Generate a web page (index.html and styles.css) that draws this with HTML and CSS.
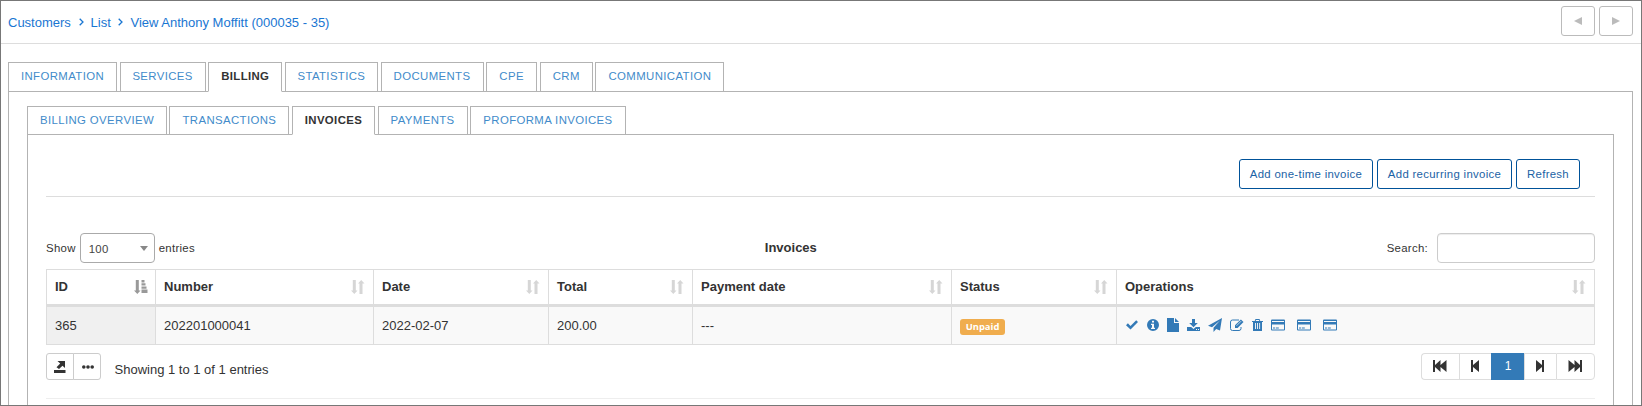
FILE: index.html
```html
<!DOCTYPE html>
<html lang="en">
<head>
<meta charset="utf-8">
<title>Customer invoices</title>
<link rel="stylesheet" href="styles.css">
</head>
<body>
<svg class="defs" aria-hidden="true">
  <symbol id="sort" viewBox="0 0 14 14"><path d="M1.800 0h3v10.500h1.700L3.300 14 0 10.500h1.800zM8.500 14h3V3.500h2L10.200 0 7 3.500h1.500z"/></symbol>
  <symbol id="sort-asc" viewBox="0 0 14 14"><path d="M1.800 0h3v10.500h1.700L3.300 14 0 10.500h1.800zM7.500 0h3v2.400h-3zM7.500 3.200h4v2.400h-4zM7.500 6.400h5v2.400h-5zM7.500 9.600h6v3.400h-6z"/></symbol>
  <symbol id="card" viewBox="0 0 14 12"><path fill-rule="evenodd" d="M1 .5h12a1 1 0 0 1 1 1v9a1 1 0 0 1-1 1H1a1 1 0 0 1-1-1v-9a1 1 0 0 1 1-1zM1 2v1h12V2zM1 5.500v5h12v-5zM2 8.500h2v1H2zM4.800 8.500h3v1h-3z"/></symbol>
</svg>
<div class="page">
  <header class="topbar">
    <nav class="crumbs">
      <a>Customers</a><svg class="chev" viewBox="0 0 5 8"><path d="M.7.7 4 4 .7 7.300"/></svg><a>List</a><svg class="chev" viewBox="0 0 5 8"><path d="M.7.7 4 4 .7 7.300"/></svg><a>View Anthony Moffitt (000035 - 35)</a>
    </nav>
    <div class="pager">
      <button class="arrow"><svg viewBox="0 0 8 8"><path d="M8 0v8L0 4z"/></svg></button>
      <button class="arrow"><svg viewBox="0 0 8 8"><path d="M0 0v8l8-4z"/></svg></button>
    </div>
  </header>
  <main class="main">
    <div class="tabs">
      <a class="tab w109">INFORMATION</a><a class="tab w86">SERVICES</a><a class="tab w74 active">BILLING</a><a class="tab w93">STATISTICS</a><a class="tab w103">DOCUMENTS</a><a class="tab w51">CPE</a><a class="tab w53">CRM</a><a class="tab w129">COMMUNICATION</a>
    </div>
    <div class="panel outer">
      <div class="tabs sub">
        <a class="tab w140">BILLING OVERVIEW</a><a class="tab w120">TRANSACTIONS</a><a class="tab w83 active">INVOICES</a><a class="tab w90">PAYMENTS</a><a class="tab w156">PROFORMA INVOICES</a>
      </div>
      <div class="panel inner">
        <div class="actions">
          <button class="btn b1">Add one-time invoice</button><button class="btn b2">Add recurring invoice</button><button class="btn b3">Refresh</button>
        </div>
        <div class="tools">
          <div class="length">Show <span class="select">100<svg class="caret" viewBox="0 0 8 5"><path d="M0 0h8L4 5z"/></svg></span> entries</div>
          <div class="title">Invoices</div>
          <label class="search">Search: <input type="text" class="field"></label>
        </div>
        <table class="grid">
          <colgroup><col class="c1"><col class="c2"><col class="c3"><col class="c4"><col class="c5"><col class="c6"><col class="c7"></colgroup>
          <thead><tr>
            <th><div class="head">ID<svg class="sort on"><use href="#sort-asc"/></svg></div></th>
            <th><div class="head">Number<svg class="sort"><use href="#sort"/></svg></div></th>
            <th><div class="head">Date<svg class="sort"><use href="#sort"/></svg></div></th>
            <th><div class="head">Total<svg class="sort"><use href="#sort"/></svg></div></th>
            <th><div class="head">Payment date<svg class="sort"><use href="#sort"/></svg></div></th>
            <th><div class="head">Status<svg class="sort"><use href="#sort"/></svg></div></th>
            <th><div class="head">Operations<svg class="sort"><use href="#sort"/></svg></div></th>
          </tr></thead>
          <tbody><tr>
            <td class="sorted">365</td><td>202201000041</td><td>2022-02-07</td><td>200.00</td><td>---</td>
            <td><span class="badge">Unpaid</span></td>
            <td><div class="ops">
              <svg class="i-check" viewBox="0 0 12 10"><path d="M0 5.200 1.900 3.300 4.500 5.900 10.200.2 12 2 4.500 9.500z"/></svg>
              <svg class="i-info" viewBox="0 0 12 12"><path fill-rule="evenodd" d="M6 0a6 6 0 1 1 0 12A6 6 0 0 1 6 0zM5 1.700v1.800h2V1.700zM4 4.700v1.200h1v2.800H4V10h4V8.700H7v-4z"/></svg>
              <svg class="i-file" viewBox="0 0 12 14"><path d="M0 0h7v5h5v9H0zM8 0l4 4H8z"/></svg>
              <svg class="i-down" viewBox="0 0 13 12"><path fill-rule="evenodd" d="M5 0h3v4h2.800L6.500 8.200 2.200 4H5zM0 8h4.200l2.300 2 2.300-2H13v4H0zM9 10v1h1v-1zM11 10v1h1v-1z"/></svg>
              <svg class="i-send" viewBox="0 0 14 14"><path d="M14 0 12 12.500 8.200 10.900 5.500 14V9.800L12 2.500 4 9.200 0 7.700z"/></svg>
              <svg class="i-edit" viewBox="0 0 14 12"><path class="line" d="M9 1H2.500A2 2 0 0 0 .5 3v6.500a2 2 0 0 0 2 2H9a2 2 0 0 0 2-2V8"/><path d="M5 6.300 10.900.4l2.600 2.600-5.900 5.900H5z"/><path class="cut" d="m6.500 6.800 4.700-4.700"/></svg>
              <svg class="i-trash" viewBox="0 0 11 12"><path fill-rule="evenodd" d="M3.500 0h4l.8 2H11v1h-1v9H1V3H0V2h2.700zM4 1l-.3 1h3.600L7 1zM3 4v6h.9V4zM5.100 4v6H6V4zM7.200 4v6h.9V4z"/></svg>
              <svg class="i-card"><use href="#card"/></svg>
              <svg class="i-card"><use href="#card"/></svg>
              <svg class="i-card"><use href="#card"/></svg>
            </div></td>
          </tr></tbody>
        </table>
        <div class="foot">
          <div class="group">
            <button class="small"><svg class="i-export" viewBox="0 0 12 12"><path d="M3.500 0H11v7L8.500 4.800 5 8 2.500 6.200 6.200 2.600zM0 9h11.500v3H0z"/></svg></button>
            <button class="small"><svg class="i-dots" viewBox="0 0 12 4"><circle cx="1.800" cy="2" r="1.800"/><circle cx="6" cy="2" r="1.800"/><circle cx="10.200" cy="2" r="1.800"/></svg></button>
          </div>
          <span class="info">Showing 1 to 1 of 1 entries</span>
          <div class="pages">
            <a class="pg p38"><svg class="i-ff" viewBox="0 0 14 12"><path d="M0 0h2v5l5.500-5v5L13.500 0v12L7.500 7v5L2 7v5H0z"/></svg></a>
            <a class="pg p32"><svg class="i-f" viewBox="0 0 8 12"><path d="M0 0h2v5l6-5v12L2 7v5H0z"/></svg></a>
            <a class="pg cur">1</a>
            <a class="pg p32"><svg class="i-f flip" viewBox="0 0 8 12"><path d="M0 0h2v5l6-5v12L2 7v5H0z"/></svg></a>
            <a class="pg p39"><svg class="i-ff flip" viewBox="0 0 14 12"><path d="M0 0h2v5l5.500-5v5L13.500 0v12L7.500 7v5L2 7v5H0z"/></svg></a>
          </div>
        </div>
      </div>
    </div>
  </main>
</div>
</body>
</html>
```

FILE: styles.css
```css
* { box-sizing: border-box; }
body { margin: 0; background: #fff; color: #333; font: 12px/18px "Liberation Sans", Arial, sans-serif; }
button { font: inherit; background: #fff; padding: 0; margin: 0; }
svg { display: block; fill: currentColor; flex: none; }
.defs { width: 0; height: 0; float: left; }
.page { height: 406px; border: 1px solid #777; overflow: hidden; }
.topbar { height: 43px; border-bottom: 1px solid #ddd; display: flex; justify-content: space-between; padding: 5px 8px 0 7px; }
.crumbs { display: flex; align-items: center; height: 34px; font-size: 13px; color: #1976d2; }
.chev { width: 5px; height: 8px; margin: 0 7px 2px 7.700px; fill: none; stroke: currentColor; stroke-width: 1.300; }
.pager { display: flex; gap: 4px; }
.arrow { width: 34px; height: 30px; border: 1px solid #bbb; border-radius: 3px; color: #bbb; display: flex; align-items: center; justify-content: center; }
.arrow svg { width: 8px; height: 8px; }
.main { padding: 18px 8px 0 7px; }
.tabs { display: flex; justify-content: flex-start; gap: 2.630px; height: 30px; position: relative; z-index: 1; margin-bottom: -1px; }
.sub { height: 29px; gap: 2.400px; }
.tab { border: 1px solid #b3b3b3; height: 100%; text-align: center; line-height: 27px; color: #428bca; white-space: nowrap; background: #fff; }
.tab, .btn, .length, .search { font-size: 11.400px; letter-spacing: .3px; }
.tab { letter-spacing: .38px; }
.tab.active { color: #333; font-weight: bold; border-bottom-color: #fff; }
.w109 { width: 109px; } .w86 { width: 86px; } .w74 { width: 74px; } .w93 { width: 93px; }
.w103 { width: 103px; } .w51 { width: 51px; } .w53 { width: 53px; } .w129 { width: 129px; }
.w140 { width: 140px; } .w120 { width: 120px; } .w83 { width: 83.400px; } .w90 { width: 90px; } .w156 { width: 156px; }
.panel { border: 1px solid #b3b3b3; border-bottom: 0; }
.outer { padding: 14px 18px 0; height: 330px; }
.inner { padding: 24px 18px 0; height: 290px; }
.actions { display: flex; justify-content: flex-end; gap: 4px; height: 38px; padding-right: 15px; border-bottom: 1px solid #ddd; }
.btn { height: 30px; border: 1px solid #005299; border-radius: 3px; color: #1b62a5; }
.b1 { width: 134px; } .b2 { width: 135px; } .b3 { width: 64px; }
.tools { display: flex; justify-content: space-between; align-items: center; height: 30px; margin: 36px 0 6px; }
.length { display: flex; align-items: center; gap: 4px; }
.length, .search { line-height: 28px; }
.select { display: flex; align-items: center; justify-content: space-between; width: 75px; height: 30px; padding: 2px 6px 0 8px; border: 1px solid #aaa; border-radius: 4px; color: #444; }
.caret { width: 8px; height: 5px; margin-bottom: 2px; color: #888; }
.title { font-size: 13px; font-weight: bold; }
.search { display: flex; justify-content: flex-end; align-items: center; gap: 9px; }
.field { width: 158px; height: 30px; border: 1px solid #ccc; border-radius: 4px; box-shadow: inset 0 1px 1px rgba(0,0,0,.075); }
.grid { width: 1549px; border-collapse: separate; border-spacing: 0; table-layout: fixed; border-left: 1px solid #ddd; border-top: 1px solid #ddd; font-size: 13px; }
.c1 { width: 109px; } .c2 { width: 218px; } .c3 { width: 175px; } .c4 { width: 144px; } .c5 { width: 259px; } .c6 { width: 165px; }
th { height: 37px; padding: 0 8px; border-right: 1px solid #ddd; border-bottom: 3px solid #ddd; text-align: left; }
.head { display: flex; justify-content: space-between; align-items: center; height: 34px; }
.sort { width: 14px; height: 14px; color: #d6d6d6; }
.sort.on { color: #999; margin-right: -1px; }
td { height: 38px; padding: 0 8px; border-right: 1px solid #ddd; border-bottom: 1px solid #ddd; background: #f9f9f9; }
td.sorted { background: #f0f0f0; }
.badge { display: block; width: 45px; height: 16px; margin-top: 3px; border-radius: 3px; background: #f0ad4e; color: #fff; font: bold 9.400px/16px "Open Sans", sans-serif; text-align: center; }
.ops { display: flex; align-items: center; color: #337ab7; margin-bottom: 2px; }
.i-check { width: 12px; height: 10px; margin: 0 9px 0 1px; }
.i-info { width: 12px; height: 12px; margin-right: 8px; }
.i-file { width: 12px; height: 14px; margin-right: 8px; }
.i-down { width: 13px; height: 12px; margin-right: 8px; }
.i-send { width: 14px; height: 14px; margin-right: 8px; }
.i-edit { width: 14px; height: 12px; margin-right: 8px; }
.i-trash { width: 11px; height: 12px; margin-right: 8px; }
.i-card { width: 14px; height: 12px; margin-right: 12px; }
.line { fill: none; stroke: currentColor; }
.cut { stroke: #f9f9f9; stroke-width: .7; }
.foot { display: flex; align-items: flex-start; height: 54px; padding-top: 8px; border-bottom: 1px solid #eee; }
.group { display: flex; }
.small { width: 28px; height: 27px; border: 1px solid #ccc; border-radius: 3px 0 0 3px; display: flex; align-items: center; justify-content: center; color: #333; }
.small + .small { margin-left: -1px; border-radius: 0 3px 3px 0; }
.i-export { width: 12px; height: 12px; }
.i-dots { width: 12px; height: 4px; margin-left: 1px; }
.info { font-size: 13px; margin: 8px auto 0 13.500px; }
.pages { display: flex; }
.pg { height: 27px; border: 1px solid #ddd; border-right: 0; display: flex; align-items: center; justify-content: center; color: #333; }
.pg:first-child { border-radius: 4px 0 0 4px; }
.pg:last-child { border-right: 1px solid #ddd; border-radius: 0 4px 4px 0; }
.p38 { width: 38px; } .p32 { width: 32px; } .p39 { width: 39px; }
.pg.cur { width: 33px; background: #337ab7; border-color: #337ab7; color: #fff; padding-bottom: 2px; }
.i-ff { width: 14px; height: 12px; margin: 0 2px 1px 0; } .i-f { width: 8px; height: 12px; margin: 0 1px 1px 0; }
.flip { transform: scaleX(-1); }
```
